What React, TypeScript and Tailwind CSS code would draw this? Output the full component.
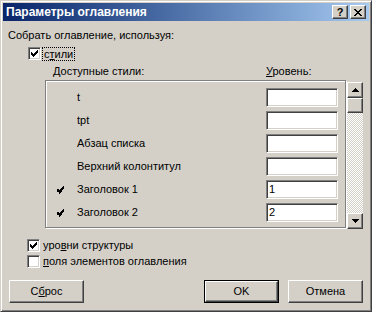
import React from 'react';

const raised =
  'bg-[#d4d0c8] border border-t-white border-l-white border-r-[#404040] border-b-[#404040] shadow-[inset_-1px_-1px_0_#808080]';
const sunken =
  'bg-white border border-t-[#808080] border-l-[#808080] border-r-white border-b-white shadow-[inset_1px_1px_0_#404040,inset_-1px_-1px_0_#d4d0c8]';

function CheckBox({ checked }: { checked: boolean }) {
  return (
    <div className={`w-[13px] h-[13px] shrink-0 flex items-center justify-center ${sunken}`}>
      {checked && (
        <svg width="7" height="7" viewBox="0 0 7 7" shapeRendering="crispEdges">
          <path d="M0 2h1v3h-1z M1 3h1v3h-1z M2 4h1v3h-1z M3 3h1v3h-1z M4 2h1v3h-1z M5 1h1v3h-1z M6 0h1v3h-1z" fill="#000" />
        </svg>
      )}
    </div>
  );
}

function Tick() {
  return (
    <svg width="8" height="8" viewBox="0 0 8 8" shapeRendering="crispEdges">
      <path d="M0 3h2v3h-2z M2 4h1v4h-1z M3 3h1v4h-1z M4 2h1v4h-1z M5 1h1v3h-1z M6 0h1v3h-1z" fill="#000" />
    </svg>
  );
}

const rows = [
  { name: 't', level: '', on: false },
  { name: 'tpt', level: '', on: false },
  { name: 'Абзац списка', level: '', on: false },
  { name: 'Верхний колонтитул', level: '', on: false },
  { name: 'Заголовок 1', level: '1', on: true },
  { name: 'Заголовок 2', level: '2', on: true },
];

export default function App() {
  return (
    <div
      className="w-[372px] h-[312px] bg-[#d4d0c8] border border-t-[#d4d0c8] border-l-[#d4d0c8] border-r-[#404040] border-b-[#404040] shadow-[inset_1px_1px_0_#fff,inset_-1px_-1px_0_#808080] p-[2px] flex flex-col text-[11px] leading-[13px] text-black"
      style={{ fontFamily: '"Liberation Sans", Arial, sans-serif' }}
    >
      {/* Title bar */}
      <div className="h-[18px] shrink-0 flex items-center bg-linear-to-r from-[#0a246a] to-[#a6caf0] pl-[3px] pr-[3px]">
        <span className="text-white font-bold text-[12px] flex-1">Параметры оглавления</span>
        <div className={`w-[16px] h-[14px] flex items-center justify-center font-bold text-[11px] leading-none ${raised}`}>?</div>
        <div className={`w-[16px] h-[14px] ml-[2px] flex items-center justify-center ${raised}`}>
          <svg width="8" height="7" viewBox="0 0 8 7" shapeRendering="crispEdges">
            <path d="M0 0h2l2 2.5L6 0h2L5 3.5 8 7H6L4 4.5 2 7H0l3-3.5z" fill="#000" />
          </svg>
        </div>
      </div>

      {/* Body */}
      <div className="mt-[8px] ml-[5px]">Собрать оглавление, используя:</div>

      <div className="mt-[5px] ml-[25px] flex items-center h-[13px]">
        <CheckBox checked />
        <span className="ml-[1px] px-[1px] border border-dotted border-black leading-[12px]">
          с<span className="underline">т</span>или
        </span>
      </div>

      <div className="mt-[5px] ml-[50px] flex">
        <span className="w-[213px]">Доступные стили:</span>
        <span>
          <span className="underline">У</span>ровень:
        </span>
      </div>

      <div className="mt-[2px] ml-[42px] flex items-start">
        <div className="w-[301px] h-[148px] border border-[#808080] shadow-[inset_1px_1px_0_#fff,1px_1px_0_#fff] pt-[7px] pl-[11px] flex flex-col gap-[4px] overflow-hidden">
          {rows.map((r) => (
            <div key={r.name} className="flex items-center h-[19px]">
              <span className="w-[20px] flex">{r.on && <Tick />}</span>
              <span className="w-[189px]">{r.name}</span>
              <div className={`w-[72px] h-[19px] pl-[2px] flex items-center ${sunken}`}>{r.level}</div>
            </div>
          ))}
        </div>
        <div className="ml-[1px] mt-[2px] w-[16px] h-[147px] flex flex-col bg-[repeating-conic-gradient(#fff_0_25%,#d4d0c8_0_50%)] bg-size-[2px_2px]">
          <div className={`h-[16px] flex items-center justify-center ${raised}`}>
            <svg width="7" height="4" viewBox="0 0 7 4" shapeRendering="crispEdges">
              <path d="M3 0h1v1h1v1h1v1h1v1H0V3h1V2h1V1h1z" fill="#000" />
            </svg>
          </div>
          <div className={`h-[15px] ${raised}`} />
          <div className="flex-1" />
          <div className={`h-[16px] flex items-center justify-center ${raised}`}>
            <svg width="7" height="4" viewBox="0 0 7 4" shapeRendering="crispEdges">
              <path d="M0 0h7v1H6v1H5v1H4v1H3V3H2V2H1V1H0z" fill="#000" />
            </svg>
          </div>
        </div>
      </div>

      <div className="mt-[10px] ml-[24px] flex items-center h-[13px]">
        <CheckBox checked />
        <span className="ml-[3px]">
          уро<span className="underline">в</span>ни структуры
        </span>
      </div>
      <div className="mt-[3px] ml-[24px] flex items-center h-[13px]">
        <CheckBox checked={false} />
        <span className="ml-[3px]">
          <span className="underline">п</span>оля элементов оглавления
        </span>
      </div>

      <div className="mt-[12px] ml-[6px] flex">
        <div className={`w-[75px] h-[23px] flex items-center justify-center ${raised}`}>
          С<span className="underline">б</span>рос
        </div>
        <div className="flex-1" />
        <div className="w-[75px] h-[23px] border border-black">
          <div className={`w-full h-full flex items-center justify-center ${raised}`}>OK</div>
        </div>
        <div className={`ml-[9px] mr-[6px] w-[75px] h-[23px] flex items-center justify-center ${raised}`}>Отмена</div>
      </div>
    </div>
  );
}
